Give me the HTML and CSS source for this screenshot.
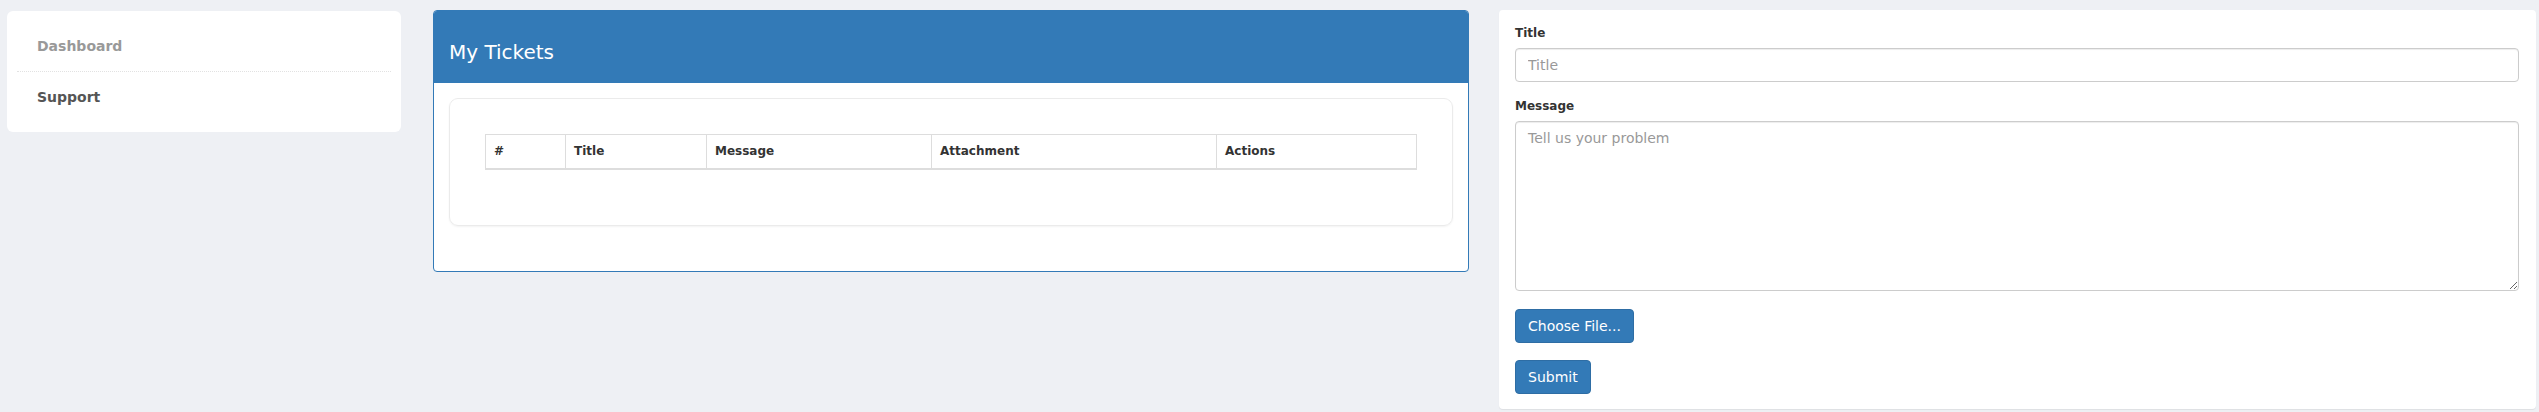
FILE: index.html
```html
<!DOCTYPE html>
<html lang="en">
<head>
<meta charset="utf-8">
<title>My Tickets</title>
<link rel="stylesheet" href="styles.css">
</head>
<body>
<div class="layout">
  <aside class="sidebar">
    <ul class="nav">
      <li class="nav-item muted">Dashboard</li>
      <li class="nav-item active">Support</li>
    </ul>
  </aside>

  <section class="panel">
    <div class="panel-heading">
      <h3 class="panel-title">My Tickets</h3>
    </div>
    <div class="panel-body">
      <div class="inner-card">
        <table class="tickets">
          <thead>
            <tr>
              <th class="c-num">#</th>
              <th class="c-title">Title</th>
              <th class="c-msg">Message</th>
              <th class="c-att">Attachment</th>
              <th class="c-act">Actions</th>
            </tr>
          </thead>
          <tbody></tbody>
        </table>
      </div>
    </div>
  </section>

  <section class="form-card">
    <form class="ticket-form">
      <div class="form-group">
        <label class="form-label" for="title">Title</label>
        <input class="form-control" id="title" type="text" placeholder="Title">
      </div>
      <div class="form-group">
        <label class="form-label" for="message">Message</label>
        <textarea class="form-control textarea" id="message" placeholder="Tell us your problem"></textarea>
      </div>
      <div class="btn-row first">
        <span class="btn">Choose File...</span>
      </div>
      <div class="btn-row">
        <button class="btn" type="button">Submit</button>
      </div>
    </form>
  </section>
</div>
</body>
</html>
```

FILE: styles.css
```css
* { box-sizing: border-box; }

html, body {
  margin: 0;
  padding: 0;
}

body {
  background: #eef0f4;
  font-family: "DejaVu Sans", "Liberation Sans", sans-serif;
  font-size: 14px;
  line-height: 1.42857;
  color: #333;
  width: 2539px;
  height: 412px;
  overflow: hidden;
}

.layout {
  display: flex;
  align-items: flex-start;
  padding: 10px 3px 0 7px;
}

/* Sidebar */
.sidebar {
  flex: 0 0 394px;
  margin-top: 1px;
  margin-right: 32px;
  background: #fff;
  border-radius: 6px;
  padding: 10px;
}

.nav {
  list-style: none;
  margin: 0;
  padding: 0;
}

.nav-item {
  padding: 15px 20px;
  line-height: 20px;
  font-weight: bold;
  font-size: 14px;
}

.nav-item + .nav-item {
  border-top: 1px dotted #e2e2e2;
}

.nav-item.muted { color: #999; }
.nav-item.active { color: #555; }

/* Main panel */
.panel {
  flex: 0 0 1036px;
  margin-right: 30px;
  background: #fff;
  border: 1px solid #337ab7;
  border-radius: 4px;
  overflow: hidden;
}

.panel-heading {
  background: #337ab7;
  color: #fff;
  padding: 10px 15px;
}

.panel-title {
  margin: 20px 0 10px;
  font-size: 20px;
  line-height: 22px;
  font-weight: normal;
}

.panel-body {
  padding: 15px;
}

.inner-card {
  border: 1px solid #ebebeb;
  border-radius: 9px;
  box-shadow: 0 1px 2px rgba(0, 0, 0, 0.05);
  padding: 35px;
  margin-bottom: 30px;
}

.tickets {
  width: 100%;
  border-collapse: collapse;
  border: 1px solid #ddd;
  margin-bottom: 20px;
}

.tickets th {
  text-align: left;
  font-size: 12px;
  font-weight: bold;
  color: #333;
  line-height: 17px;
  padding: 8px;
  border: 1px solid #ddd;
  border-bottom-width: 2px;
}

.c-num { width: 80px; }
.c-title { width: 141px; }
.c-msg { width: 225px; }
.c-att { width: 285px; }

/* Form card */
.form-card {
  flex: 1 1 auto;
  min-width: 0;
  background: #fff;
  border-radius: 4px;
  box-shadow: 0 1px 1px rgba(0, 0, 0, 0.07);
  padding: 14px 17px 15px 16px;
}

.form-group {
  margin-bottom: 15px;
}

.form-label {
  display: block;
  font-size: 12px;
  font-weight: bold;
  line-height: 19px;
  margin-bottom: 5px;
  color: #333;
}

.form-control {
  display: block;
  width: 100%;
  height: 34px;
  padding: 6px 12px;
  font-family: "DejaVu Sans", "Liberation Sans", sans-serif;
  font-size: 14px;
  line-height: 20px;
  color: #555;
  background: #fff;
  border: 1px solid #ccc;
  border-radius: 4px;
  box-shadow: inset 0 1px 1px rgba(0, 0, 0, 0.075);
  margin: 0;
}

.form-control::placeholder {
  color: #999;
}

.textarea {
  height: 170px;
  resize: vertical;
}

.btn-row {
  margin-bottom: 17px;
}

.btn-row.first {
  margin-top: 18px;
}

.btn-row:last-child {
  margin-bottom: 0;
}

.btn {
  display: inline-block;
  padding: 6px 12px;
  font-family: "DejaVu Sans", "Liberation Sans", sans-serif;
  font-size: 14px;
  line-height: 20px;
  color: #fff;
  background: #337ab7;
  border: 1px solid #2e6da4;
  border-radius: 4px;
  cursor: pointer;
  vertical-align: top;
}
```
